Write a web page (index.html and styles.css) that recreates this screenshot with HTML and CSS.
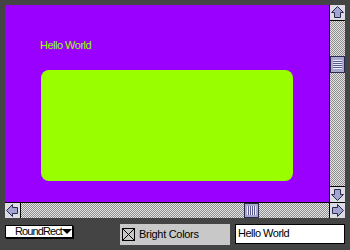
FILE: index.html
```html
<!DOCTYPE html>
<html>
<head>
<meta charset="utf-8">
<link rel="stylesheet" href="styles.css">
</head>
<body>
<div class="window">
  <div class="canvas">
    <div class="label">Hello World</div>
    <div class="shape"></div>
  </div>
  <div class="vscroll">
    <div class="btn btn-up"><svg width="15" height="15" viewBox="0 0 15 15"><polygon points="7.5,1.5 13.5,7.5 10.5,7.5 10.5,12.5 4.5,12.5 4.5,7.5 1.5,7.5" class="arr"/></svg></div>
    <div class="track vtrack"><div class="thumb vthumb"><div class="grip vgrip"></div></div></div>
    <div class="btn btn-down"><svg width="15" height="15" viewBox="0 0 15 15"><polygon points="7.5,13.5 13.5,7.5 10.5,7.5 10.5,2.5 4.5,2.5 4.5,7.5 1.5,7.5" class="arr"/></svg></div>
  </div>
  <div class="hscroll">
    <div class="btn btn-left"><svg width="15" height="15" viewBox="0 0 15 15"><polygon points="1.5,7.5 7.5,1.5 7.5,4.5 12.5,4.5 12.5,10.5 7.5,10.5 7.5,13.5" class="arr"/></svg></div>
    <div class="track htrack"><div class="thumb hthumb"><div class="grip hgrip"></div></div></div>
    <div class="btn btn-right"><svg width="15" height="15" viewBox="0 0 15 15"><polygon points="13.5,7.5 7.5,1.5 7.5,4.5 2.5,4.5 2.5,10.5 7.5,10.5 7.5,13.5" class="arr"/></svg></div>
  </div>
</div>
<div class="controls">
  <div class="popup"><span class="popup-text">RoundRect</span><span class="tri"></span></div>
  <div class="checkgroup">
    <div class="checkbox"><svg width="11" height="11" viewBox="0 0 11 11"><path d="M0 0L11 11M11 0L0 11" stroke="#000" stroke-width="1"/></svg></div>
    <span class="checklabel">Bright Colors</span>
  </div>
  <div class="field">Hello World</div>
</div>
</body>
</html>
```
FILE: styles.css
```css
html, body {
  margin: 0;
  padding: 0;
}
body {
  background: #444444;
  width: 350px;
  height: 250px;
  padding: 5px;
  box-sizing: border-box;
  font-family: "Liberation Sans", Arial, sans-serif;
  font-size: 11px;
  letter-spacing: -0.5px;
  overflow: hidden;
}
.window {
  width: 340px;
  height: 213px;
  display: grid;
  grid-template-columns: 324px 16px;
  grid-template-rows: 197px 16px;
}
.canvas {
  grid-area: 1 / 1;
  background: #9900ff;
  padding: 34px 0 0 0;
  box-sizing: border-box;
  overflow: hidden;
}
.label {
  color: #99ff00;
  line-height: 13px;
  margin-left: 35px;
}
.shape {
  margin: 18px 0 0 36px;
  width: 252px;
  height: 111px;
  background: #99ff00;
  border-radius: 8px;
}
.vscroll {
  grid-area: 1 / 2;
  border-left: 1px solid #000;
  display: flex;
  flex-direction: column;
}
.hscroll {
  grid-area: 2 / 1 / 3 / 3;
  border-top: 1px solid #000;
  display: flex;
}
.btn {
  width: 15px;
  height: 15px;
  background: #dcdce4;
  flex: none;
}
.btn svg {
  display: block;
}
.arr {
  fill: #a4a4d0;
  stroke: #2a2a50;
  stroke-width: 1;
  stroke-linejoin: miter;
}
.btn-up { border-bottom: 1px solid #000; }
.btn-down { border-top: 1px solid #000; }
.btn-left { border-right: 1px solid #000; }
.btn-right { border-left: 1px solid #000; }
.track {
  flex: 1;
  background: repeating-conic-gradient(#8c8c8c 0 25%, #e6e6e6 0 50%) 0 0 / 2px 2px;
  display: flex;
}
.vtrack {
  flex-direction: column;
}
.thumb {
  background: #a8a8cc;
  border: 1px solid #2a2a50;
  box-sizing: border-box;
  display: flex;
  align-items: center;
  justify-content: center;
  flex: none;
}
.vthumb {
  margin-top: 35px;
  width: 15px;
  height: 17px;
}
.hthumb {
  margin-left: 223px;
  width: 15px;
  height: 15px;
}
.vgrip {
  width: 9px;
  height: 9px;
  background: repeating-linear-gradient(to bottom, #ececff 0 1px, #5a5a90 1px 2px);
}
.hgrip {
  width: 9px;
  height: 9px;
  background: repeating-linear-gradient(to right, #ececff 0 1px, #5a5a90 1px 2px);
}
.controls {
  display: flex;
  align-items: flex-start;
  margin-top: 6px;
}
.popup {
  margin-top: 1px;
  width: 68px;
  height: 13px;
  box-sizing: border-box;
  border: 1px solid #000;
  background: #fff;
  box-shadow: 1px 1px 0 #000;
  display: flex;
  align-items: center;
  padding-left: 9px;
  line-height: 11px;
  color: #000;
  flex: none;
}
.popup-text {
  flex: none;
  letter-spacing: -0.9px;
}
.tri {
  width: 0;
  height: 0;
  border-left: 5px solid transparent;
  border-right: 5px solid transparent;
  border-top: 5px solid #000;
  margin-left: auto;
  margin-right: 1px;
  flex: none;
}
.checkgroup {
  margin-left: 47px;
  width: 110px;
  height: 21px;
  background: #c8c8c8;
  display: flex;
  align-items: center;
  padding-left: 2px;
  box-sizing: border-box;
  color: #000;
  flex: none;
}
.checkbox {
  width: 13px;
  height: 13px;
  box-sizing: border-box;
  border: 1px solid #000;
  background: #c8c8c8;
  flex: none;
}
.checkbox svg {
  display: block;
}
.checklabel {
  margin-left: 4px;
  line-height: 13px;
  letter-spacing: -0.3px;
}
.field {
  margin-left: 5px;
  width: 110px;
  height: 20px;
  box-sizing: border-box;
  border: 1px solid #000;
  background: #fff;
  color: #000;
  padding: 2px 0 0 2px;
  line-height: 13px;
  flex: none;
}
```
